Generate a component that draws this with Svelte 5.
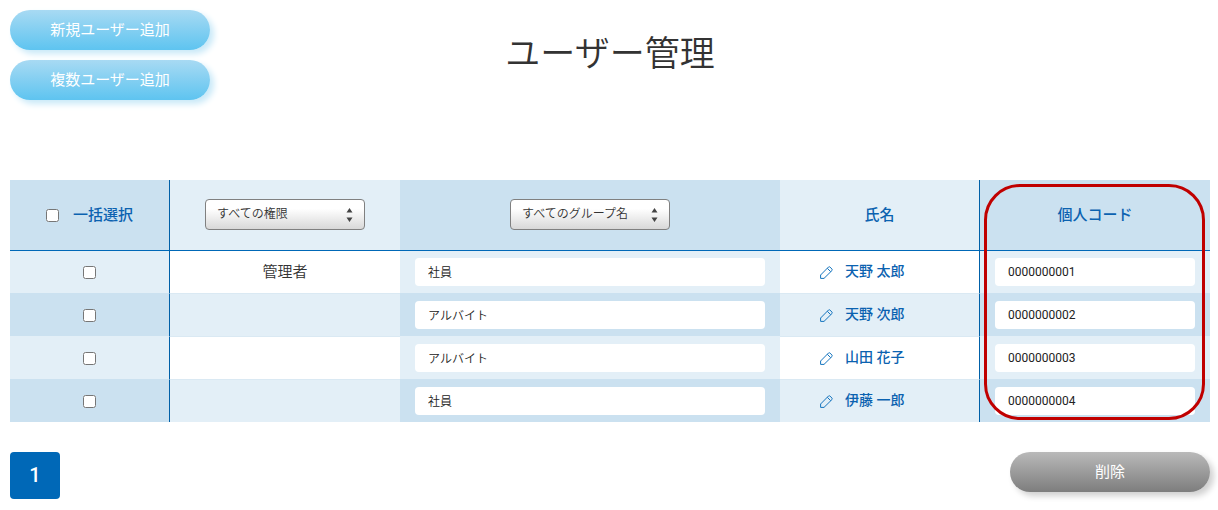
<script>
  let users = $state([
    { id: 1, role: '管理者', group: '社員', name: '天野 太郎', code: '0000000001', checked: false },
    { id: 2, role: '', group: 'アルバイト', name: '天野 次郎', code: '0000000002', checked: false },
    { id: 3, role: '', group: 'アルバイト', name: '山田 花子', code: '0000000003', checked: false },
    { id: 4, role: '', group: '社員', name: '伊藤 一郎', code: '0000000004', checked: false }
  ]);

  function toggleAll(event) {
    for (const user of users) user.checked = event.currentTarget.checked;
  }
</script>

{#snippet arrows()}
  <svg class="arrows" width="7" height="14" viewBox="0 0 7 14" aria-hidden="true">
    <path d="M3.5 0 6.5 4.5H.5ZM.5 9.5H6.5L3.5 14Z" fill="#444" />
  </svg>
{/snippet}

<main>
  <header>
    <div class="actions">
      <button class="pill blue" type="button">新規ユーザー追加</button>
      <button class="pill blue" type="button">複数ユーザー追加</button>
    </div>
    <h1>ユーザー管理</h1>
    <div></div>
  </header>

  <div class="table-wrap">
    <table>
      <colgroup>
        <col class="c-check" /><col class="c-role" /><col /><col class="c-name" /><col class="c-code" />
      </colgroup>
      <thead>
        <tr>
          <th class="dark line">
            <label class="all"><input type="checkbox" onchange={toggleAll} />一括選択</label>
          </th>
          <th>
            <span class="select">
              <select aria-label="権限"><option>すべての権限</option></select>
              {@render arrows()}
            </span>
          </th>
          <th class="dark">
            <span class="select">
              <select aria-label="グループ名"><option>すべてのグループ名</option></select>
              {@render arrows()}
            </span>
          </th>
          <th class="line">氏名</th>
          <th class="dark">個人コード</th>
        </tr>
      </thead>
      <tbody>
        {#each users as user (user.id)}
          <tr>
            <td class="dark line">
              <input type="checkbox" bind:checked={user.checked} aria-label={user.name} />
            </td>
            <td>{user.role}</td>
            <td class="dark"><input class="field group" type="text" bind:value={user.group} aria-label="グループ名" /></td>
            <td class="name line">
              <a href="#user-{user.id}">
                <svg width="13" height="13" viewBox="0 0 13 13" fill="none" stroke="#1474be" stroke-width="1" stroke-linejoin="round" aria-hidden="true">
                  <path d="M.6 12.4V9L8.5 1Q9.2.4 9.9 1L12 3.1Q12.6 3.8 12 4.5L4 12.4ZM7.3 2.3 10.7 5.7" />
                </svg>
                <span>{user.name}</span>
              </a>
            </td>
            <td class="dark"><input class="field" type="text" bind:value={user.code} aria-label="個人コード" /></td>
          </tr>
        {/each}
      </tbody>
    </table>
    <div class="highlight"></div>
  </div>

  <footer>
    <button class="page" type="button" aria-current="page">1</button>
    <button class="pill gray" type="button">削除</button>
  </footer>
</main>

<style>
  :global(body) {
    margin: 0;
    background: #fff;
  }
  main {
    padding: 10px 8px 10px 10px;
    color: #333;
    font: 15px/20px Roboto, 'Noto Sans CJK JP', sans-serif;
  }
  main * {
    box-sizing: border-box;
  }
  button,
  input,
  select {
    font-family: inherit;
    margin: 0;
  }
  header {
    display: grid;
    grid-template-columns: 200px 1fr 200px;
    margin-bottom: 80px;
  }
  .actions {
    display: flex;
    flex-direction: column;
    gap: 10px;
  }
  h1 {
    margin: 20px 0 0;
    text-align: center;
    font-size: 35px;
    line-height: 50px;
    font-weight: 350;
  }
  .pill {
    width: 200px;
    height: 40px;
    padding: 0 0 4px;
    border: 0;
    border-radius: 20px;
    color: #fff;
    font-size: 15px;
    font-weight: 400;
  }
  .blue {
    background: linear-gradient(#a8daf3, #5ec4f0);
    box-shadow: 4px 4px 6px #c9e9f8;
  }
  .gray {
    background: linear-gradient(#b9b9b9, #7d7d7d);
    box-shadow: 4px 4px 6px #d0d0d0;
  }
  .table-wrap {
    position: relative;
  }
  table {
    width: 100%;
    table-layout: fixed;
    border-collapse: separate;
    border-spacing: 0;
  }
  .c-check { width: 160px; }
  .c-role { width: 230px; }
  .c-name { width: 200px; }
  .c-code { width: 230px; }
  th {
    height: 70px;
    padding: 0;
    background: #e3eff7;
    color: #0b62b0;
    font-weight: 500;
  }
  th.dark {
    background: #cbe1f0;
  }
  td {
    height: 43px;
    padding: 0 15px;
    border-top: 1px solid #dae9f3;
    text-align: center;
    font-weight: 350;
  }
  td.dark {
    background: #e3eff7;
    border-top-color: #e3eff7;
  }
  tr:nth-child(even) td {
    background: #e3eff7;
  }
  tr:nth-child(even) td.dark {
    background: #cbe1f0;
    border-top-color: #cbe1f0;
  }
  tbody tr:first-child td {
    border-top-color: #0068b7;
  }
  .line {
    border-right: 1px solid #0060a8;
  }
  td.name {
    padding: 0 0 0 40px;
  }
  input[type='checkbox'] {
    width: 13px;
    height: 13px;
    display: block;
    margin: 0 auto;
  }
  .all {
    display: flex;
    align-items: center;
    justify-content: center;
    gap: 14px;
  }
  .all input[type='checkbox'] {
    margin: 0;
  }
  .select {
    position: relative;
    display: inline-block;
    vertical-align: middle;
    padding-bottom: 2px;
  }
  select {
    display: block;
    appearance: none;
    width: 160px;
    height: 31px;
    padding: 0 11px;
    border: 1px solid #808080;
    border-radius: 4px;
    background: linear-gradient(#fff 30%, #d8d8d8);
    color: #333;
    font-size: 12px;
    font-weight: 350;
  }
  .arrows {
    position: absolute;
    top: 9px;
    right: 12px;
    pointer-events: none;
  }
  .field {
    display: block;
    width: 100%;
    height: 28px;
    padding: 0 13px;
    border: 0;
    border-radius: 4px;
    background: #fff;
    color: #222;
    font-size: 12px;
    font-weight: 400;
  }
  .group {
    padding-bottom: 2px;
    font-weight: 350;
  }
  a {
    display: flex;
    align-items: center;
    gap: 12px;
    color: #0b62b0;
    font-size: 14px;
    font-weight: 500;
    text-decoration: none;
  }
  a span {
    padding-bottom: 2px;
  }
  .highlight {
    position: absolute;
    top: 4px;
    right: 5px;
    bottom: 2px;
    width: 221px;
    border: 3px solid #c00000;
    border-radius: 36px;
    pointer-events: none;
  }
  footer {
    display: flex;
    justify-content: space-between;
    align-items: flex-start;
    margin-top: 30px;
  }
  .page {
    width: 50px;
    height: 47px;
    padding: 0 0 2px;
    border: 0;
    border-radius: 4px;
    background: #0068b7;
    color: #fff;
    font-size: 20px;
    font-weight: 500;
  }
</style>
